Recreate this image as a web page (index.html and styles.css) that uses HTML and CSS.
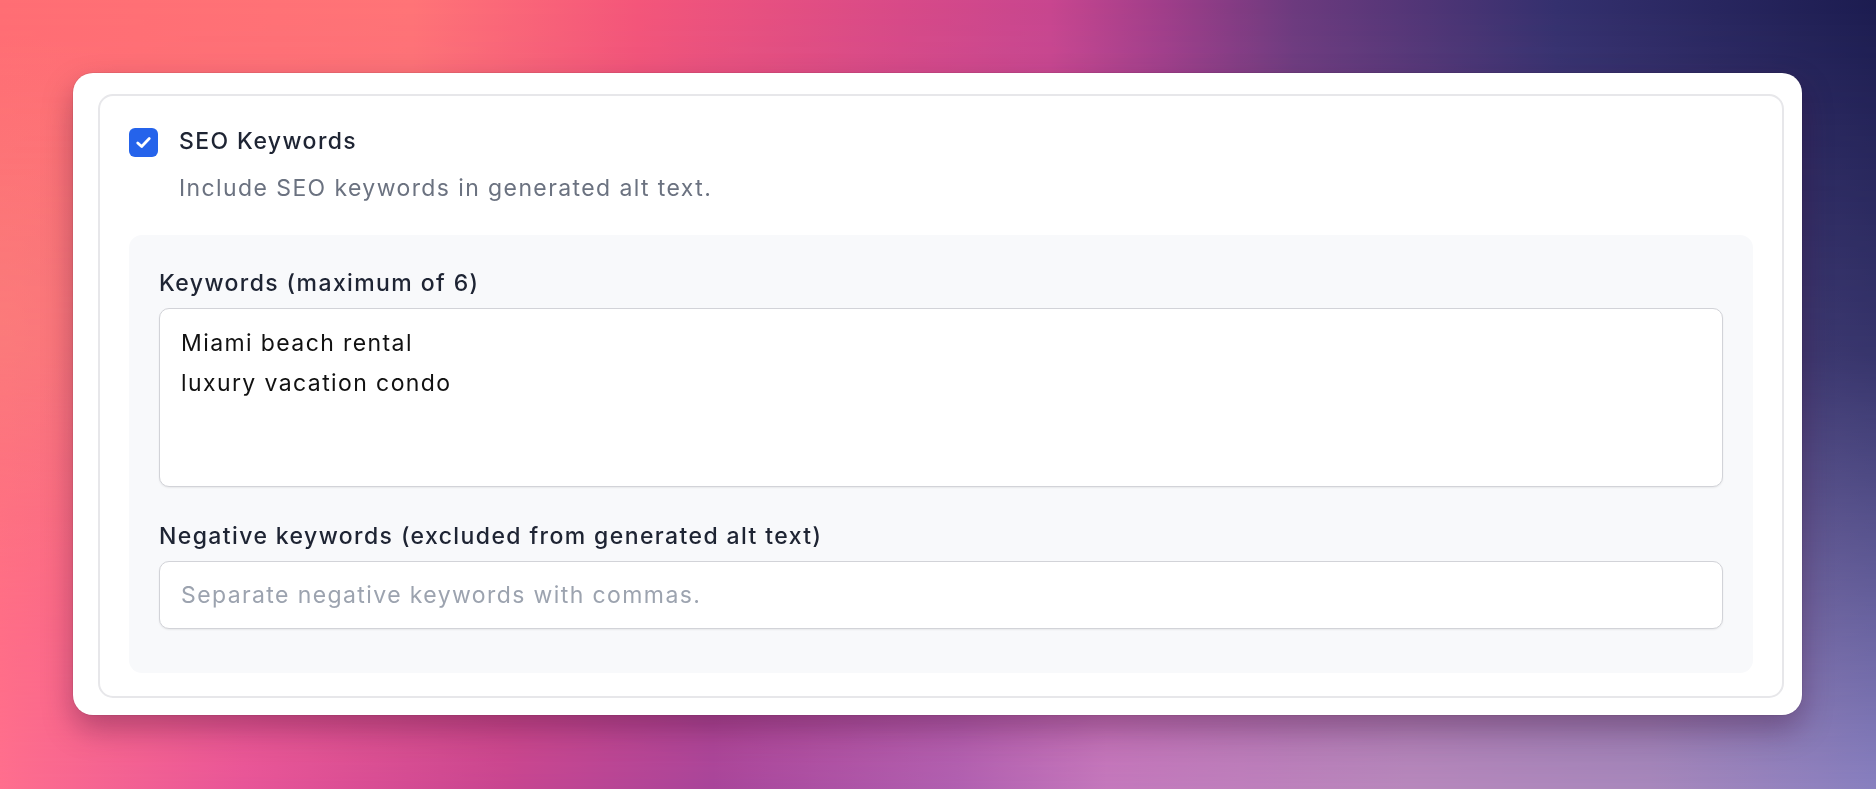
FILE: index.html
```html
<!DOCTYPE html>
<html lang="en">
<head>
<meta charset="utf-8">
<title>SEO Keywords</title>
<link rel="stylesheet" href="styles.css">
</head>
<body>
<main class="stage">
  <section class="card">
    <div class="group">
      <div class="option">
        <span class="checkbox" role="checkbox" aria-checked="true">
          <svg viewBox="0 0 16 16" width="21" height="21" aria-hidden="true">
            <path d="M3.6 8.3 L6.6 11.1 L12.4 5" fill="none" stroke="#ffffff" stroke-width="2.1" stroke-linecap="round" stroke-linejoin="round"/>
          </svg>
        </span>
        <div class="option-text">
          <div class="option-title">SEO Keywords</div>
          <p class="option-desc">Include SEO keywords in generated alt text.</p>
        </div>
      </div>
      <div class="settings">
        <div class="field">
          <label class="field-label" for="kw">Keywords (maximum of 6)</label>
          <textarea id="kw" class="textarea">Miami beach rental
luxury vacation condo</textarea>
        </div>
        <div class="field field-second">
          <label class="field-label" for="neg">Negative keywords (excluded from generated alt text)</label>
          <input id="neg" class="input" type="text" placeholder="Separate negative keywords with commas.">
        </div>
      </div>
    </div>
  </section>
</main>
</body>
</html>
```

FILE: styles.css
```css
* { box-sizing: border-box; }

html, body {
  margin: 0;
  padding: 0;
  height: 789px;
  overflow: hidden;
}

body {
  font-family: Inter, "Liberation Sans", sans-serif;
  letter-spacing: 1.4px;
  background:
    radial-gradient(ellipse 260px 300px at 0% 42%, rgba(246, 140, 118, 0.55), rgba(246, 140, 118, 0) 100%),
    linear-gradient(to right, #ff6e74 0%, #ff7477 22%, #f4567a 34%, #d84a88 48%, #c8468f 56%, #a03e8a 62%, #6c3a7e 69%, #34306e 83%, #1c1c50 100%);
  position: relative;
}

body::before {
  content: "";
  position: fixed;
  inset: 0;
  z-index: -1;
  background: linear-gradient(to right, #ff6e8e 0%, #e85598 13%, #c84590 27%, #a8459a 38%, #b060b0 51%, #c478bc 59%, #b888bc 75%, #a888bc 88%, #8880c0 100%);
  -webkit-mask-image: linear-gradient(to bottom, rgba(0,0,0,0) 0%, rgba(0,0,0,0.25) 45%, #000 100%);
  mask-image: linear-gradient(to bottom, rgba(0,0,0,0) 0%, rgba(0,0,0,0.25) 45%, #000 100%);
}

.stage {
  position: relative;
  z-index: 0;
  padding: 73px 74px 0 73px;
}

.card {
  background: #ffffff;
  border-radius: 20px;
  padding: 20px 17px 16px 24px;
  border: 1px solid rgba(255, 255, 255, 0.9);
  box-shadow: 0 14px 30px rgba(60, 10, 50, 0.35), 0 0 0 1px rgba(0, 0, 0, 0.06);
}

.group {
  border: 2px solid #e7e7ea;
  border-radius: 15px;
  padding: 29px 29px 23px 29px;
}

.option {
  display: flex;
  align-items: flex-start;
  gap: 21px;
}

.checkbox {
  flex: none;
  width: 29px;
  height: 29px;
  margin-top: 3px;
  border-radius: 6px;
  background: #2563eb;
  display: flex;
  align-items: center;
  justify-content: center;
}

.checkbox svg { display: block; }

.option-text { min-width: 0; }

.option-title {
  font-size: 23px;
  line-height: 32px;
  font-weight: 500;
  color: #1e2433;
}

.option-desc {
  margin: 15px 0 0 0;
  font-size: 23px;
  line-height: 32px;
  color: #6b7280;
}

.settings {
  margin-top: 31px;
  background: #f8f9fb;
  border-radius: 13px;
  padding: 32px 30px 44px 30px;
}

.field {
  display: flex;
  flex-direction: column;
}

.field-second { margin-top: 33px; }

.field-label {
  font-size: 23px;
  line-height: 32px;
  font-weight: 500;
  color: #1e2433;
  margin-bottom: 9px;
}

.textarea,
.input {
  display: block;
  width: 100%;
  font-family: Inter, "Liberation Sans", sans-serif;
  letter-spacing: 1.4px;
  font-size: 23px;
  line-height: 32px;
  color: #111111;
  background: #ffffff;
  border: 1px solid #d2d3d8;
  border-radius: 10px;
  box-shadow: 0 1px 2px rgba(0, 0, 0, 0.07);
  outline: none;
  margin: 0;
}

.textarea {
  height: 179px;
  padding: 14px 21px;
  line-height: 40px;
  resize: none;
  overflow: hidden;
}

.input {
  height: 68px;
  padding: 0 21px;
}

.input::placeholder {
  color: #9ca3af;
  opacity: 1;
}
```
